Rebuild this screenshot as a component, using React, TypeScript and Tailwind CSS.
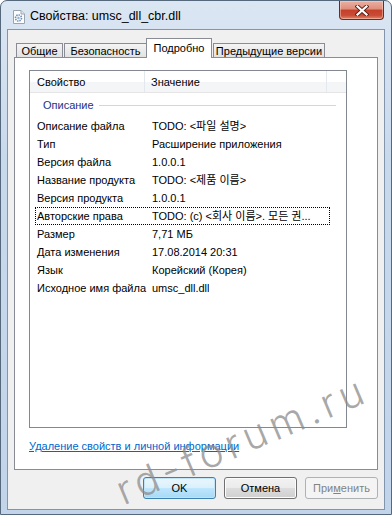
import React from "react";

const rows: [string, string][] = [
  ["Описание файла", "TODO: <파일 설명>"],
  ["Тип", "Расширение приложения"],
  ["Версия файла", "1.0.0.1"],
  ["Название продукта", "TODO: <제품 이름>"],
  ["Версия продукта", "1.0.0.1"],
  ["Авторские права", "TODO: (c) <회사 이름>. 모든 권..."],
  ["Размер", "7,71 МБ"],
  ["Дата изменения", "17.08.2014 20:31"],
  ["Язык", "Корейский (Корея)"],
  ["Исходное имя файла", "umsc_dll.dll"],
];

function DllIcon() {
  return (
    <svg width="12" height="14" viewBox="0 0 12 14">
      <path d="M0.5 0.5 H8 L11.5 4 V13.5 H0.5 Z" fill="#fbfcfd" stroke="#9aa4ae" />
      <path d="M8 0.5 V4 H11.5" fill="#e4e8ec" stroke="#9aa4ae" />
      <circle cx="5.5" cy="8" r="3" fill="none" stroke="#6f8fb0" strokeWidth="1.6" strokeDasharray="1.4 0.9" />
      <circle cx="5.5" cy="8" r="1.2" fill="#8fb0d0" />
    </svg>
  );
}

function CloseButton() {
  return (
    <div className="flex h-[19px] w-[45px] items-center justify-center rounded-b-[4px] border border-t-0 border-[#6b2a22] bg-[linear-gradient(180deg,#eab0a2_0%,#de8d7b_45%,#c63f28_50%,#c94c36_80%,#e2876a_100%)] shadow-[inset_0_0_0_1px_rgba(255,220,210,0.45)]">
      <svg width="14" height="11" viewBox="0 0 14 11">
        <path d="M2.5 1.5 L11.5 9.5 M11.5 1.5 L2.5 9.5" stroke="#5a2118" strokeWidth="4" strokeLinecap="square" />
        <path d="M2.5 1.5 L11.5 9.5 M11.5 1.5 L2.5 9.5" stroke="#ffffff" strokeWidth="2.2" strokeLinecap="square" />
      </svg>
    </div>
  );
}

export default function App() {
  return (
    <div className="relative flex h-[515px] w-[392px] flex-col overflow-hidden rounded-t-[7px] border border-[#56687c] bg-[linear-gradient(180deg,#dbe6f3_0%,#c9d9ec_30%,#c2d4ea_100%)] font-['Liberation_Sans','Noto_Sans_CJK_KR',sans-serif] text-[11px] text-black">
      {/* Title bar */}
      <div className="flex h-[28px] shrink-0 items-start">
        <div className="ml-[12px] mt-[9px]">
          <DllIcon />
        </div>
        <div className="ml-[5px] mt-[8px] text-[12.5px] leading-[15px] text-black">Свойства: umsc_dll_cbr.dll</div>
        <div className="ml-auto mr-[7px]">
          <CloseButton />
        </div>
      </div>

      {/* Client area */}
      <div className="mx-[6px] mb-[4px] flex flex-1 flex-col border border-[#8196ad] bg-[#f0f0f0] pl-[6px] pr-[6px]">
        {/* Tabs */}
        <div className="mt-[8px] flex h-[19px] items-end pl-[2px]">
          <div className="flex h-[14px] w-[47px] items-center justify-center border border-b-0 border-[#898c95] bg-[linear-gradient(180deg,#f4f4f4,#e2e2e2)] pt-[1px] leading-none">
            Общие
          </div>
          <div className="ml-[1px] flex h-[14px] w-[83px] items-center justify-center border border-b-0 border-[#898c95] bg-[linear-gradient(180deg,#f4f4f4,#e2e2e2)] pt-[1px] leading-none">
            Безопасность
          </div>
          <div className="relative z-10 -mb-px ml-[-1px] flex h-[20px] w-[66px] items-start justify-center border border-b-0 border-[#898c95] bg-white pt-[4px] leading-none">
            Подробно
          </div>
          <div className="ml-[1px] flex h-[14px] w-[112px] items-center justify-center border border-b-0 border-[#898c95] bg-[linear-gradient(180deg,#f4f4f4,#e2e2e2)] pt-[1px] leading-none">
            Предыдущие версии
          </div>
        </div>

        {/* Panel */}
        <div className="flex h-[413px] flex-col border border-[#898c95] bg-white pl-[14px] pt-[12px]">
          <div className="flex h-[358px] w-[318px] flex-col border border-[#828790] bg-white">
            {/* Header */}
            <div className="flex h-[22px] shrink-0 border-b border-[#e5e5e5] bg-[linear-gradient(180deg,#ffffff_0%,#ffffff_50%,#f4f5f7_51%,#f4f5f7_100%)]">
              <div className="flex w-[115px] items-center border-r border-[#e3e8ee] pl-[7px] pt-[2px]">Свойство</div>
              <div className="flex w-[182px] items-center border-r border-[#e3e8ee] pl-[6px] pt-[2px]">Значение</div>
              <div className="flex-1" />
            </div>
            {/* Group */}
            <div className="flex h-[24px] items-center pl-[13px] pr-[10px] pt-[1px]">
              <span className="text-[#1e3287]">Описание</span>
              <div className="ml-[5px] h-px flex-1 bg-[#d0d7e2]" />
            </div>
            {rows.map(([k, v], i) => (
              <div
                key={k}
                className={
                  i === 5
                    ? "ml-[5px] flex h-[18px] w-[295px] items-center border border-dotted border-black pl-[1px]"
                    : "ml-[5px] flex h-[18px] w-[295px] items-center border border-transparent pl-[1px]"
                }
              >
                <div className="w-[115px] shrink-0 whitespace-nowrap">{k}</div>
                <div className="truncate whitespace-nowrap">{v}</div>
              </div>
            ))}
          </div>
          <div className="mt-[11px] leading-[15px]">
            <span className="text-[#0066cc] underline">Удаление свойств и личной информации</span>
          </div>
        </div>

        {/* Buttons */}
        <div className="mt-[7px] flex justify-end gap-[8px]">
          <div className="flex h-[22px] w-[73px] items-center justify-center rounded-[3px] border border-[#3c7fb1] bg-[linear-gradient(180deg,#eaf6fd_0%,#d9f0fc_50%,#bee6fd_51%,#a7d9f5_100%)] shadow-[inset_0_0_0_1px_#c2e4f6]">
            OK
          </div>
          <div className="flex h-[22px] w-[73px] items-center justify-center rounded-[3px] border border-[#707070] bg-[linear-gradient(180deg,#f2f2f2_0%,#ebebeb_50%,#dddddd_51%,#cfcfcf_100%)] shadow-[inset_0_0_0_1px_#fcfcfc]">
            Отмена
          </div>
          <div className="flex h-[22px] w-[73px] items-center justify-center rounded-[3px] border border-[#adb2b5] bg-[#f4f4f4] text-[#838383]">
            При<span className="underline">м</span>енить
          </div>
        </div>
      </div>

      {/* Watermark */}
      <div className="pointer-events-none absolute left-[241px] top-[439px] h-0 w-0">
        <div className="absolute left-0 top-0 -translate-x-1/2 -translate-y-1/2 rotate-[-23deg] whitespace-nowrap font-['Inter',sans-serif] text-[40px] font-light leading-none tracking-[5px] text-[#8c8c8c]/75">
          rd-forum.ru
        </div>
      </div>
    </div>
  );
}
